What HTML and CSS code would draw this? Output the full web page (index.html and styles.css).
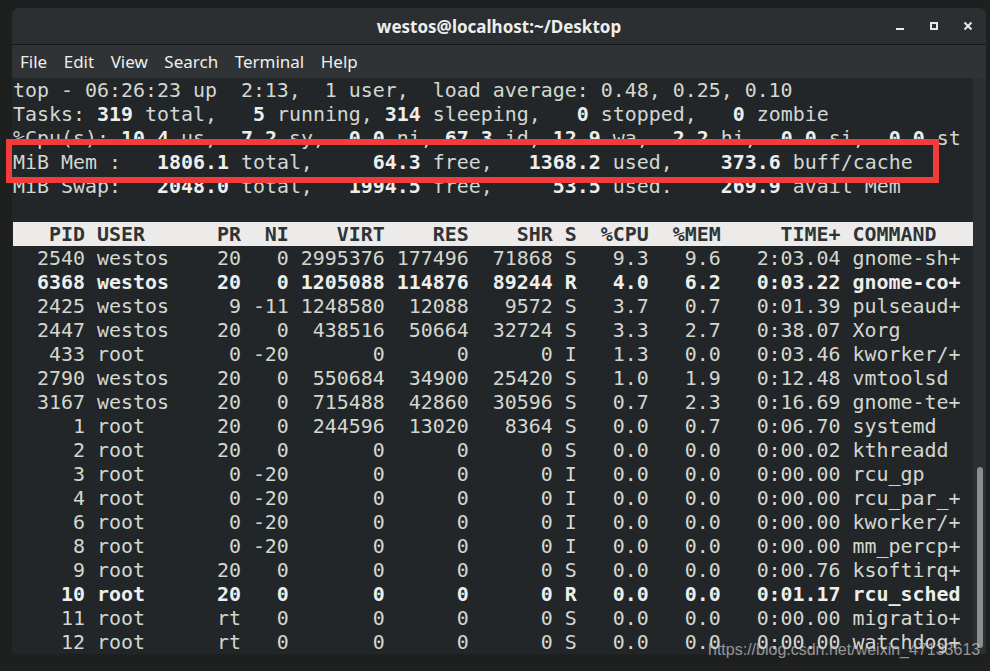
FILE: index.html
```html
<!DOCTYPE html>
<html lang="en">
   <head>
      <meta charset="UTF-8" />
      <meta name="viewport" content="width=device-width, initial-scale=1.0"/>
      <title>westos@localhost:~/Desktop</title>
      <link rel="stylesheet" href="styles.css">
   </head>
   <body>
      <div class="window">
         <header class="titlebar">
            <div class="title">westos@localhost:~/Desktop</div>
            <div class="controls">
               <svg viewBox="0 0 16 16"><rect x="4" y="10" width="8" height="2" fill="#e8e8e7"/></svg>
               <svg viewBox="0 0 16 16"><rect x="5" y="5" width="6" height="6" fill="none" stroke="#e8e8e7" stroke-width="2"/></svg>
               <svg viewBox="0 0 16 16"><path d="M4.5 4.5 L11.5 11.5 M11.5 4.5 L4.5 11.5" stroke="#e8e8e7" stroke-width="2"/></svg>
            </div>
         </header>
         <nav class="menubar">
            <span>File</span>
            <span>Edit</span>
            <span>View</span>
            <span>Search</span>
            <span>Terminal</span>
            <span>Help</span>
         </nav>
         <div class="term">
            <div class="screen">
               <div class="line">top - 06:26:23 up  2:13,  1 user,  load average: 0.48, 0.25, 0.10</div>
               <div class="line">Tasks: <b>319</b> total,   <b>5</b> running, <b>314</b> sleeping,   <b>0</b> stopped,   <b>0</b> zombie</div>
               <div class="line">%Cpu(s): <b>10.4</b> us,  <b>7.2</b> sy,  <b>0.0</b> ni, <b>67.3</b> id, <b>12.9</b> wa,  <b>2.2</b> hi,  <b>0.0</b> si,  <b>0.0</b> st</div>
               <div class="line">MiB Mem :   <b>1806.1</b> total,     <b>64.3</b> free,   <b>1368.2</b> used,    <b>373.6</b> buff/cache</div>
               <div class="line">MiB Swap:   <b>2048.0</b> total,   <b>1994.5</b> free,     <b>53.5</b> used.    <b>269.9</b> avail Mem</div>
               <div class="line"> </div>
               <div class="line head">   PID USER      PR  NI    VIRT    RES    SHR S  %CPU  %MEM     TIME+ COMMAND   </div>
               <div class="line">  2540 westos    20   0 2995376 177496  71868 S   9.3   9.6   2:03.04 gnome-sh+</div>
               <div class="line hot">  6368 westos    20   0 1205088 114876  89244 R   4.0   6.2   0:03.22 gnome-co+</div>
               <div class="line">  2425 westos     9 -11 1248580  12088   9572 S   3.7   0.7   0:01.39 pulseaud+</div>
               <div class="line">  2447 westos    20   0  438516  50664  32724 S   3.3   2.7   0:38.07 Xorg</div>
               <div class="line">   433 root       0 -20       0      0      0 I   1.3   0.0   0:03.46 kworker/+</div>
               <div class="line">  2790 westos    20   0  550684  34900  25420 S   1.0   1.9   0:12.48 vmtoolsd</div>
               <div class="line">  3167 westos    20   0  715488  42860  30596 S   0.7   2.3   0:16.69 gnome-te+</div>
               <div class="line">     1 root      20   0  244596  13020   8364 S   0.0   0.7   0:06.70 systemd</div>
               <div class="line">     2 root      20   0       0      0      0 S   0.0   0.0   0:00.02 kthreadd</div>
               <div class="line">     3 root       0 -20       0      0      0 I   0.0   0.0   0:00.00 rcu_gp</div>
               <div class="line">     4 root       0 -20       0      0      0 I   0.0   0.0   0:00.00 rcu_par_+</div>
               <div class="line">     6 root       0 -20       0      0      0 I   0.0   0.0   0:00.00 kworker/+</div>
               <div class="line">     8 root       0 -20       0      0      0 I   0.0   0.0   0:00.00 mm_percp+</div>
               <div class="line">     9 root      20   0       0      0      0 S   0.0   0.0   0:00.76 ksoftirq+</div>
               <div class="line hot">    10 root      20   0       0      0      0 R   0.0   0.0   0:01.17 rcu_sched</div>
               <div class="line">    11 root      rt   0       0      0      0 S   0.0   0.0   0:00.00 migratio+</div>
               <div class="line">    12 root      rt   0       0      0      0 S   0.0   0.0   0:00.00 watchdog+</div>
            </div>
            <div class="scroll">
               <div class="slider"></div>
            </div>
         </div>
      </div>
      <div class="mark"></div>
      <div class="watermark">https://blog.csdn.net/weixin_47133613</div>
   </body>
</html>
```

FILE: styles.css
```css
body {
margin: 0;
font-family: 'Noto Sans', sans-serif;
background-color: #1e1f1f;
}
.window {
margin: 8px 4px 0 12px;
border-radius: 7px 7px 0 0;
overflow: hidden;
background-color: #232629;
}
.titlebar {
height: 36px;
display: grid;
grid-template-columns: 1fr auto 1fr;
align-items: center;
background-color: #2c2f31;
border-bottom: 1px solid #18191a;
}
.title {
grid-column: 2;
font-size: 17px;
font-weight: 700;
color: #eeeeec;
}
.controls {
grid-column: 3;
justify-self: end;
display: flex;
gap: 18px;
padding-right: 10px;
}
.controls svg {
display: block;
width: 16px;
height: 16px;
}
.menubar {
height: 33px;
display: flex;
align-items: center;
gap: 16.5px;
padding-left: 8px;
background-color: #2f3335;
color: #eeeeec;
font-size: 17px;
}
.term {
display: flex;
}
.screen {
width: 960px;
padding-left: 1px;
font-family: 'DejaVu Sans Mono', monospace;
font-size: 19.93px;
line-height: 23px;
color: #d3d7cf;
}
.screen b {
color: #eeeeec;
}
.line {
height: 23px;
padding-top: 1px;
white-space: pre;
}
.line.head {
background-color: #ecebea;
color: #2e3436;
font-weight: 700;
}
.line.hot {
font-weight: 700;
color: #eeeeec;
}
.scroll {
width: 13px;
background-color: #2b2f31;
padding-top: 389px;
}
.slider {
width: 6px;
height: 181px;
margin-left: 4px;
border-radius: 3px;
background-color: #8b8e90;
}
.mark {
position: absolute;
left: 6px;
top: 139px;
width: 933px;
height: 44px;
box-sizing: border-box;
border: 6px solid #f43b3b;
}
.watermark {
position: absolute;
left: 708px;
top: 641px;
font-family: 'Liberation Sans', sans-serif;
font-size: 16px;
color: rgba(200, 200, 200, 0.7);
}
```
